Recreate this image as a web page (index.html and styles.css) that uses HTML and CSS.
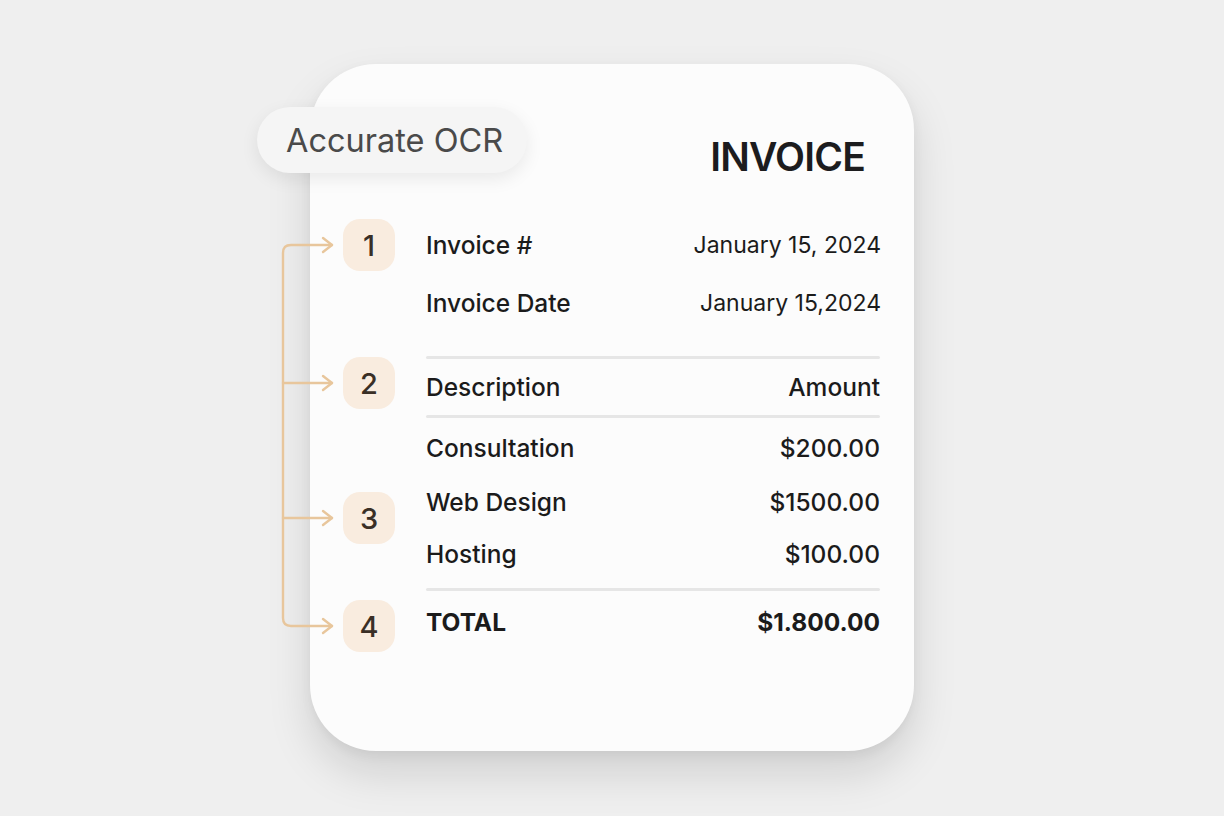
FILE: index.html
```html
<!DOCTYPE html>
<html lang="en">
<head>
<meta charset="utf-8">
<title>Invoice OCR</title>
<link rel="stylesheet" href="styles.css">
</head>
<body>
<main class="stage">
  <section class="card">
    <div class="pill">Accurate OCR</div>
    <svg class="bracket" width="65" height="400" viewBox="0 0 65 400" fill="none" stroke="#e8c69c" stroke-width="2.4" stroke-linecap="round" stroke-linejoin="round">
      <path d="M57 10 H16 Q8 10 8 18 V383 Q8 391 16 391 H57"/>
      <path d="M8 148 H57"/>
      <path d="M8 283 H57"/>
      <path d="M48 3 L57 10 L48 17"/>
      <path d="M48 141 L57 148 L48 155"/>
      <path d="M48 276 L57 283 L48 290"/>
      <path d="M48 384 L57 391 L48 398"/>
    </svg>
    <header class="header"><h1 class="title">INVOICE</h1></header>
    <div class="grid">
      <div class="badge b1">1</div>
      <div class="row r1"><span class="label">Invoice #</span><span class="value">January 15, 2024</span></div>
      <div class="row r2"><span class="label">Invoice Date</span><span class="value">January 15,2024</span></div>
      <div class="rule r4"></div>
      <div class="badge b2">2</div>
      <div class="row r5"><span class="label">Description</span><span class="amount">Amount</span></div>
      <div class="rule r6"></div>
      <div class="row r7"><span class="label">Consultation</span><span class="amount">$200.00</span></div>
      <div class="badge b3">3</div>
      <div class="row r8"><span class="label">Web Design</span><span class="amount">$1500.00</span></div>
      <div class="row r9"><span class="label">Hosting</span><span class="amount">$100.00</span></div>
      <div class="rule r11"></div>
      <div class="badge b4">4</div>
      <div class="row r12 total"><span class="label">TOTAL</span><span class="amount">$1.800.00</span></div>
    </div>
  </section>
</main>
</body>
</html>
```
FILE: styles.css
```css
* { box-sizing: border-box; }
html, body { margin: 0; padding: 0; }
body {
  background: #efefef;
  font-family: Inter, "Noto Sans", "Liberation Sans", sans-serif;
  color: #1b1b1b;
}
.stage {
  width: 1224px;
  height: 816px;
  display: flex;
  align-items: center;
  justify-content: center;
}
.card {
  position: relative;
  width: 604px;
  height: 687px;
  margin-top: -1px;
  border-radius: 66px;
  background: #fcfcfc;
  padding: 69px 34px 0 33px;
  box-shadow: 0 22px 44px rgba(0,0,0,0.13), 0 4px 12px rgba(0,0,0,0.05);
}
.pill {
  position: absolute;
  left: -53px;
  top: 43px;
  width: 270px;
  height: 66px;
  border-radius: 33px;
  background: #f5f5f5;
  box-shadow: 0 6px 18px rgba(0,0,0,0.08);
  display: flex;
  align-items: center;
  padding-left: 29px;
  font-size: 32.5px;
  font-weight: 400;
  color: #4a4a4a;
}
.bracket {
  position: absolute;
  left: -35px;
  top: 171px;
}
.header {
  display: flex;
  justify-content: flex-end;
  padding-right: 15px;
  height: 48px;
}
.title {
  margin: 0;
  font-size: 39px;
  line-height: 48px;
  font-weight: 600;
  color: #1c1c1e;
  letter-spacing: -0.8px;
}
.grid {
  margin-top: 39px;
  display: grid;
  grid-template-columns: 52px 1fr;
  column-gap: 31px;
  grid-template-rows: 50px 66px 20px 3px 56px 3px 60px 48px 56px 6px 3px 62px;
}
.row {
  grid-column: 2;
  display: flex;
  align-items: center;
  justify-content: space-between;
  font-size: 24.5px;
  font-weight: 500;
}
.r1 { grid-row: 1; }
.r2 { grid-row: 2; }
.r4 { grid-row: 4; }
.r5 { grid-row: 5; }
.r6 { grid-row: 6; }
.r7 { grid-row: 7; }
.r8 { grid-row: 8; }
.r9 { grid-row: 9; }
.r11 { grid-row: 11; }
.r12 { grid-row: 12; }
.value {
  font-weight: 400;
  font-size: 23px;
  margin-right: -1px;
}
.amount { font-weight: 500; }
.total { font-weight: 700; }
.total .amount { font-weight: 700; }
.rule {
  grid-column: 2;
  background: #e6e6e6;
  border-radius: 2px;
}
.badge {
  grid-column: 1;
  width: 52px;
  height: 52px;
  border-radius: 17px;
  background: #f9ecdf;
  color: #3a2f26;
  font-size: 29px;
  font-weight: 500;
  display: flex;
  align-items: center;
  justify-content: center;
}
.b1 { grid-row: 1; align-self: center; }
.b2 { grid-row: 5; align-self: center; margin-bottom: 8px; }
.b3 { grid-row: 8 / 10; align-self: start; margin-top: 14px; }
.b4 { grid-row: 12; align-self: center; margin-top: 8px; }
```
